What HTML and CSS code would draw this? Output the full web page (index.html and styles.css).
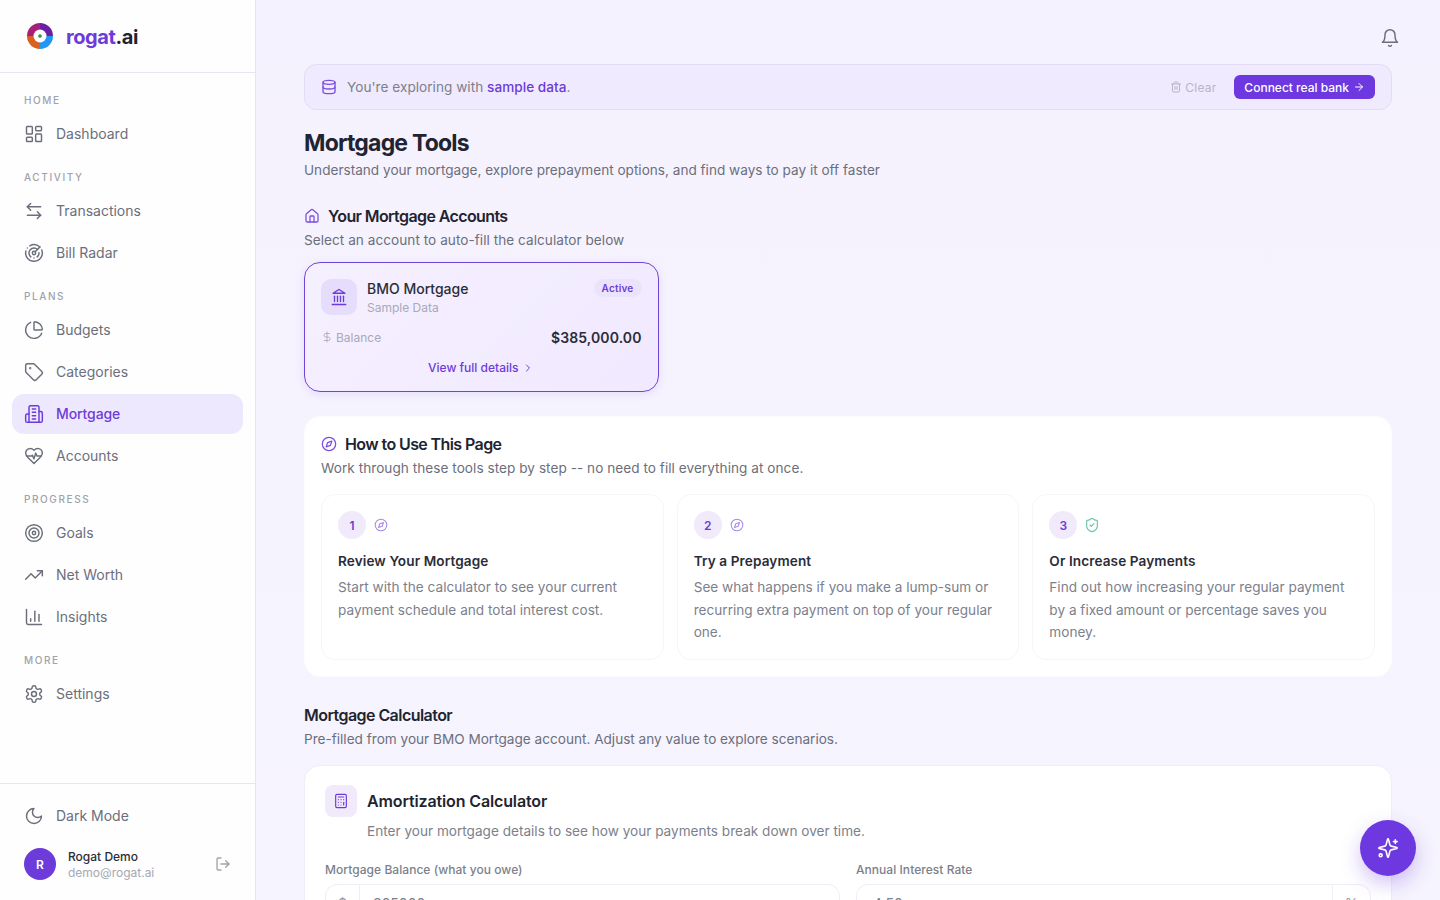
FILE: index.html
```html
<!DOCTYPE html>
<html lang="en">
<head>
<meta charset="utf-8">
<title>Mortgage Tools</title>
<link rel="stylesheet" href="styles.css">
</head>
<body>
<svg class="sprite" aria-hidden="true">
<symbol id="i-dash" viewBox="0 0 24 24"><rect x="3" y="3" width="7" height="9" rx="1"/><rect x="14" y="3" width="7" height="5" rx="1"/><rect x="14" y="12" width="7" height="9" rx="1"/><rect x="3" y="16" width="7" height="5" rx="1"/></symbol>
<symbol id="i-swap" viewBox="0 0 24 24"><path d="M8 3 4 7l4 4"/><path d="M4 7h16"/><path d="m16 21 4-4-4-4"/><path d="M20 17H4"/></symbol>
<symbol id="i-radar" viewBox="0 0 24 24"><path d="M19.07 4.93A10 10 0 0 0 6.99 3.34"/><path d="M4 6h.01"/><path d="M2.29 9.62A10 10 0 1 0 21.31 8.35"/><path d="M16.24 7.76A6 6 0 1 0 8.23 16.67"/><path d="M12 18h.01"/><path d="M17.99 11.66A6 6 0 0 1 15.77 16.67"/><circle cx="12" cy="12" r="2"/><path d="m13.41 10.59 5.66-5.66"/></symbol>
<symbol id="i-pie" viewBox="0 0 24 24"><path d="M21 12c.552 0 1.005-.449.95-.998a10 10 0 0 0-8.953-8.951c-.55-.055-.998.398-.998.95v8a1 1 0 0 0 1 1z"/><path d="M21.21 15.89A10 10 0 1 1 8 2.83"/></symbol>
<symbol id="i-tag" viewBox="0 0 24 24"><path d="M12.586 2.586A2 2 0 0 0 11.172 2H4a2 2 0 0 0-2 2v7.172a2 2 0 0 0 .586 1.414l8.704 8.704a2.426 2.426 0 0 0 3.42 0l6.58-6.58a2.426 2.426 0 0 0 0-3.42z"/><circle cx="7.5" cy="7.5" r=".5"/></symbol>
<symbol id="i-building" viewBox="0 0 24 24"><path d="M6 22V4a2 2 0 0 1 2-2h8a2 2 0 0 1 2 2v18Z"/><path d="M6 12H4a2 2 0 0 0-2 2v6a2 2 0 0 0 2 2h2"/><path d="M18 9h2a2 2 0 0 1 2 2v9a2 2 0 0 1-2 2h-2"/><path d="M10 6h4"/><path d="M10 10h4"/><path d="M10 14h4"/><path d="M10 18h4"/></symbol>
<symbol id="i-heart" viewBox="0 0 24 24"><path d="M19 14c1.49-1.46 3-3.21 3-5.5A5.5 5.5 0 0 0 16.5 3c-1.76 0-3 .5-4.5 2-1.5-1.5-2.74-2-4.5-2A5.5 5.5 0 0 0 2 8.5c0 2.3 1.5 4.05 3 5.5l7 7Z"/><path d="M3.22 12H9.5l.5-1 2 4.5 2-7 1.5 3.5h5.27"/></symbol>
<symbol id="i-target" viewBox="0 0 24 24"><circle cx="12" cy="12" r="10"/><circle cx="12" cy="12" r="6"/><circle cx="12" cy="12" r="2"/></symbol>
<symbol id="i-trend" viewBox="0 0 24 24"><path d="M22 7 13.5 15.5 8.5 10.5 2 17"/><path d="M16 7h6v6"/></symbol>
<symbol id="i-chart" viewBox="0 0 24 24"><path d="M3 3v16a2 2 0 0 0 2 2h16"/><path d="M18 17V9"/><path d="M13 17V5"/><path d="M8 17v-3"/></symbol>
<symbol id="i-gear" viewBox="0 0 24 24"><path d="M12.22 2h-.44a2 2 0 0 0-2 2v.18a2 2 0 0 1-1 1.73l-.43.25a2 2 0 0 1-2 0l-.15-.08a2 2 0 0 0-2.73.73l-.22.38a2 2 0 0 0 .73 2.73l.15.1a2 2 0 0 1 1 1.72v.51a2 2 0 0 1-1 1.74l-.15.09a2 2 0 0 0-.73 2.73l.22.38a2 2 0 0 0 2.73.73l.15-.08a2 2 0 0 1 2 0l.43.25a2 2 0 0 1 1 1.73V20a2 2 0 0 0 2 2h.44a2 2 0 0 0 2-2v-.18a2 2 0 0 1 1-1.73l.43-.25a2 2 0 0 1 2 0l.15.08a2 2 0 0 0 2.73-.73l.22-.39a2 2 0 0 0-.73-2.73l-.15-.08a2 2 0 0 1-1-1.74v-.5a2 2 0 0 1 1-1.74l.15-.09a2 2 0 0 0 .73-2.73l-.22-.38a2 2 0 0 0-2.73-.73l-.15.08a2 2 0 0 1-2 0l-.43-.25a2 2 0 0 1-1-1.73V4a2 2 0 0 0-2-2z"/><circle cx="12" cy="12" r="3"/></symbol>
<symbol id="i-moon" viewBox="0 0 24 24"><path d="M12 3a6 6 0 0 0 9 9 9 9 0 1 1-9-9Z"/></symbol>
<symbol id="i-logout" viewBox="0 0 24 24"><path d="M9 21H5a2 2 0 0 1-2-2V5a2 2 0 0 1 2-2h4"/><path d="m16 17 5-5-5-5"/><path d="M21 12H9"/></symbol>
<symbol id="i-bell" viewBox="0 0 24 24"><path d="M6 8a6 6 0 0 1 12 0c0 7 3 9 3 9H3s3-2 3-9"/><path d="M10.3 21a1.94 1.94 0 0 0 3.4 0"/></symbol>
<symbol id="i-db" viewBox="0 0 24 24"><ellipse cx="12" cy="5" rx="9" ry="3"/><path d="M3 5V19A9 3 0 0 0 21 19V5"/><path d="M3 12A9 3 0 0 0 21 12"/></symbol>
<symbol id="i-trash" viewBox="0 0 24 24"><path d="M3 6h18"/><path d="M19 6v14c0 1-1 2-2 2H7c-1 0-2-1-2-2V6"/><path d="M8 6V4c0-1 1-2 2-2h4c1 0 2 1 2 2v2"/><path d="M10 11v6"/><path d="M14 11v6"/></symbol>
<symbol id="i-arrow" viewBox="0 0 24 24"><path d="M5 12h14"/><path d="m12 5 7 7-7 7"/></symbol>
<symbol id="i-home" viewBox="0 0 24 24"><path d="M15 21v-8a1 1 0 0 0-1-1h-4a1 1 0 0 0-1 1v8"/><path d="M3 10a2 2 0 0 1 .709-1.528l7-5.999a2 2 0 0 1 2.582 0l7 5.999A2 2 0 0 1 21 10v9a2 2 0 0 1-2 2H5a2 2 0 0 1-2-2z"/></symbol>
<symbol id="i-bank" viewBox="0 0 24 24"><path d="M3 22h18"/><path d="M6 18v-7"/><path d="M10 18v-7"/><path d="M14 18v-7"/><path d="M18 18v-7"/><path d="M12 2l8 5H4z"/></symbol>
<symbol id="i-dollar" viewBox="0 0 24 24"><path d="M12 2v20"/><path d="M17 5H9.5a3.5 3.5 0 0 0 0 7h5a3.5 3.5 0 0 1 0 7H6"/></symbol>
<symbol id="i-chev" viewBox="0 0 24 24"><path d="m9 18 6-6-6-6"/></symbol>
<symbol id="i-compass" viewBox="0 0 24 24"><circle cx="12" cy="12" r="10"/><polygon points="16.24 7.76 14.12 14.12 7.76 16.24 9.88 9.88"/></symbol>
<symbol id="i-shield" viewBox="0 0 24 24"><path d="M20 13c0 5-3.5 7.5-7.66 8.95a1 1 0 0 1-.67-.01C7.5 20.5 4 18 4 13V6a1 1 0 0 1 1-1c2 0 4.5-1.2 6.24-2.72a1.17 1.17 0 0 1 1.52 0C14.51 3.81 17 5 19 5a1 1 0 0 1 1 1z"/><path d="m9 12 2 2 4-4"/></symbol>
<symbol id="i-calc" viewBox="0 0 24 24"><rect x="4" y="2" width="16" height="20" rx="2"/><path d="M8 6h8"/><path d="M16 14v4"/><path d="M16 10h.01"/><path d="M12 10h.01"/><path d="M8 10h.01"/><path d="M12 14h.01"/><path d="M8 14h.01"/><path d="M12 18h.01"/><path d="M8 18h.01"/></symbol>
<symbol id="i-spark" viewBox="0 0 24 24"><path d="M9.937 15.5A2 2 0 0 0 8.5 14.063l-6.135-1.582a.5.5 0 0 1 0-.962L8.5 9.936A2 2 0 0 0 9.937 8.5l1.582-6.135a.5.5 0 0 1 .963 0L14.063 8.5A2 2 0 0 0 15.5 9.937l6.135 1.581a.5.5 0 0 1 0 .964L15.5 14.063a2 2 0 0 0-1.437 1.437l-1.582 6.135a.5.5 0 0 1-.963 0z"/><path d="M20 3v4"/><path d="M22 5h-4"/><circle cx="4" cy="20" r="1.6"/></symbol>
</svg>

<div class="app">
  <aside class="sidebar">
    <div class="brand">
      <svg class="logo" viewBox="0 0 28 28" aria-hidden="true">
        <path class="l-purple" d="M14 0A14 14 0 0 1 28 14H14z"/>
        <path class="l-blue" d="M28 14A14 14 0 0 1 14 28V14z"/>
        <path class="l-orange" d="M14 28A14 14 0 0 1 0 14H14z"/>
        <path class="l-magenta" d="M0 14A14 14 0 0 1 14 0V14z"/>
        <circle class="l-white" cx="14" cy="14" r="7"/>
        <circle class="l-green" cx="14" cy="14" r="2"/>
      </svg>
      <span class="brand-name"><span class="brand-accent">rogat</span>.ai</span>
    </div>
    <nav class="nav">
      <div class="group">
        <div class="group-label">HOME</div>
        <a class="item"><svg class="ico"><use href="#i-dash"/></svg>Dashboard</a>
      </div>
      <div class="group">
        <div class="group-label">ACTIVITY</div>
        <a class="item"><svg class="ico"><use href="#i-swap"/></svg>Transactions</a>
        <a class="item"><svg class="ico"><use href="#i-radar"/></svg>Bill Radar</a>
      </div>
      <div class="group">
        <div class="group-label">PLANS</div>
        <a class="item"><svg class="ico"><use href="#i-pie"/></svg>Budgets</a>
        <a class="item"><svg class="ico"><use href="#i-tag"/></svg>Categories</a>
        <a class="item active"><svg class="ico"><use href="#i-building"/></svg>Mortgage</a>
        <a class="item"><svg class="ico"><use href="#i-heart"/></svg>Accounts</a>
      </div>
      <div class="group">
        <div class="group-label">PROGRESS</div>
        <a class="item"><svg class="ico"><use href="#i-target"/></svg>Goals</a>
        <a class="item"><svg class="ico"><use href="#i-trend"/></svg>Net Worth</a>
        <a class="item"><svg class="ico"><use href="#i-chart"/></svg>Insights</a>
      </div>
      <div class="group">
        <div class="group-label">MORE</div>
        <a class="item"><svg class="ico"><use href="#i-gear"/></svg>Settings</a>
      </div>
    </nav>
    <div class="side-foot">
      <a class="item"><svg class="ico"><use href="#i-moon"/></svg>Dark Mode</a>
      <div class="user">
        <div class="avatar">R</div>
        <div class="user-text">
          <div class="user-name">Rogat Demo</div>
          <div class="user-mail">demo@rogat.ai</div>
        </div>
        <svg class="ico-out"><use href="#i-logout"/></svg>
      </div>
    </div>
  </aside>

  <main class="main">
    <div class="topbar"><svg class="bell"><use href="#i-bell"/></svg></div>

    <div class="banner">
      <svg class="banner-ico"><use href="#i-db"/></svg>
      <span class="banner-text">You're exploring with <span class="banner-link">sample data</span>.</span>
      <span class="clear"><svg class="clear-ico"><use href="#i-trash"/></svg>Clear</span>
      <span class="connect">Connect real bank<svg class="connect-ico"><use href="#i-arrow"/></svg></span>
    </div>

    <h1 class="title">Mortgage Tools</h1>
    <p class="subtitle">Understand your mortgage, explore prepayment options, and find ways to pay it off faster</p>

    <section class="accounts">
      <h2 class="sec-head"><svg class="sec-ico"><use href="#i-home"/></svg>Your Mortgage Accounts</h2>
      <p class="sec-sub">Select an account to auto-fill the calculator below</p>
      <div class="acct">
        <div class="acct-top">
          <div class="acct-badge"><svg class="acct-ico"><use href="#i-bank"/></svg></div>
          <div class="acct-names">
            <div class="acct-name">BMO Mortgage</div>
            <div class="acct-type">Sample Data</div>
          </div>
          <span class="pill">Active</span>
        </div>
        <div class="acct-row">
          <span class="acct-label"><svg class="dollar"><use href="#i-dollar"/></svg>Balance</span>
          <span class="acct-amt">$385,000.00</span>
        </div>
        <div class="acct-link">View full details<svg class="chev"><use href="#i-chev"/></svg></div>
      </div>
    </section>

    <section class="howto">
      <h2 class="sec-head"><svg class="sec-ico"><use href="#i-compass"/></svg><span class="howto-title">How to Use This Page</span></h2>
      <p class="sec-sub">Work through these tools step by step -- no need to fill everything at once.</p>
      <div class="steps">
        <article class="step">
          <div class="step-top"><span class="num">1</span><svg class="step-ico"><use href="#i-compass"/></svg></div>
          <h3 class="step-title">Review Your Mortgage</h3>
          <p class="step-text">Start with the calculator to see your current payment schedule and total interest cost.</p>
        </article>
        <article class="step">
          <div class="step-top"><span class="num">2</span><svg class="step-ico"><use href="#i-compass"/></svg></div>
          <h3 class="step-title">Try a Prepayment</h3>
          <p class="step-text">See what happens if you make a lump-sum or recurring extra payment on top of your regular one.</p>
        </article>
        <article class="step">
          <div class="step-top"><span class="num">3</span><svg class="step-ico green"><use href="#i-shield"/></svg></div>
          <h3 class="step-title">Or Increase Payments</h3>
          <p class="step-text">Find out how increasing your regular payment by a fixed amount or percentage saves you money.</p>
        </article>
      </div>
    </section>

    <section class="calc-sec">
      <h2 class="calc-head">Mortgage Calculator</h2>
      <p class="sec-sub">Pre-filled from your BMO Mortgage account. Adjust any value to explore scenarios.</p>
      <div class="calc">
        <div class="calc-top">
          <div class="calc-badge"><svg class="calc-ico"><use href="#i-calc"/></svg></div>
          <h3 class="calc-title">Amortization Calculator</h3>
        </div>
        <p class="calc-sub">Enter your mortgage details to see how your payments break down over time.</p>
        <div class="fields">
          <div class="field">
            <div class="field-label">Mortgage Balance (what you owe)</div>
            <div class="input"><span class="affix pre">$</span><span class="val">385000</span></div>
          </div>
          <div class="field">
            <div class="field-label">Annual Interest Rate</div>
            <div class="input"><span class="val">4.50</span><span class="affix post">%</span></div>
          </div>
        </div>
      </div>
    </section>
  </main>
</div>
<button class="fab" aria-label="Assistant"><svg class="fab-ico"><use href="#i-spark"/></svg></button>
</body>
</html>
```
FILE: styles.css
```css
* { box-sizing: border-box; }
html, body { margin: 0; height: 100%; overflow: hidden; }
body { font-family: Inter, "Liberation Sans", sans-serif; color: #1f2430; background: #f5f2ff; }
h1, h2, h3, p { margin: 0; }
.sprite { display: none; }
svg { fill: none; stroke: currentColor; stroke-width: 2; stroke-linecap: round; stroke-linejoin: round; flex: none; }

.app { display: flex; height: 900px; overflow: hidden; }

/* Sidebar */
.sidebar { width: 256px; flex: none; height: 900px; background: #fefefe; border-right: 1px solid #e6e3f3; display: flex; flex-direction: column; }
.brand { height: 73px; flex: none; border-bottom: 1px solid #e7e6ee; display: flex; align-items: center; gap: 13px; padding: 0 0 0 27px; }
.logo { width: 26px; height: 26px; stroke: none; }
.l-purple { fill: #6b1fa3; }
.l-blue { fill: #2196f3; }
.l-orange { fill: #d9601f; }
.l-magenta { fill: #a81f78; }
.l-white { fill: #fff; }
.l-green { fill: #2e9e3f; }
.brand-name { font-size: 20px; font-weight: 700; letter-spacing: -0.4px; color: #1f2430; padding-top: 2px; }
.brand-accent { color: #6d3bd9; }
.nav { flex: 1; padding: 19px 12px 0; }
.group { margin-bottom: 15px; }
.group-label { font-size: 10px; font-weight: 500; line-height: 16px; letter-spacing: 1.6px; color: #a0a2ac; padding-left: 12px; margin-bottom: 6px; }
.item { display: flex; align-items: center; gap: 12px; height: 40px; padding: 0 12px 1px; margin-bottom: 2px; border-radius: 12px; font-size: 14px; font-weight: 400; color: #6b6f7b; }
.item:last-child { margin-bottom: 0; }
.ico { width: 20px; height: 20px; stroke-width: 1.75; color: #6b6f7b; }
.item.active { background: #ede8fd; color: #6d3bd9; font-weight: 500; letter-spacing: -0.1px; }
.active .ico { color: #6d3bd9; }
.side-foot { flex: none; height: 117px; border-top: 1px solid #e7e6ee; padding: 12px 12px 0; }
.user { display: flex; align-items: center; height: 32px; margin-top: 12px; padding: 0 12px; }
.avatar { width: 32px; height: 32px; border-radius: 50%; background: #6d3bd9; color: #fff; font-size: 12px; font-weight: 600; display: flex; align-items: center; justify-content: center; }
.user-text { margin-left: 12px; flex: 1; padding-top: 1px; }
.user-name { font-size: 12px; font-weight: 500; line-height: 16px; color: #2a2d38; }
.user-mail { font-size: 12px; line-height: 16px; color: #a6a8b4; }
.ico-out { width: 16px; height: 16px; color: #a0a2ad; }

/* Main */
.main { flex: 1; min-width: 0; padding: 0 48px; background: linear-gradient(180deg, #f5f2ff 0%, #f6f4fe 100%); }
.topbar { height: 64px; display: flex; align-items: center; justify-content: flex-end; }
.bell { width: 20px; height: 20px; color: #6b6f7b; margin-top: 11px; margin-right: -8px; stroke-width: 1.75; }
.banner { height: 46px; display: flex; align-items: center; padding: 0 16px; border: 1px solid #e2dcf5; border-radius: 12px; background: #efeafd; }
.banner-ico { width: 16px; height: 16px; color: #7c4ee0; margin-right: 10px; stroke-width: 2; }
.banner-text { flex: 1; font-size: 13.6px; letter-spacing: 0.03px; color: #7c7f8c; }
.banner-link { color: #6d3bd9; font-weight: 500; }
.clear { display: inline-flex; align-items: center; gap: 3px; font-size: 12px; letter-spacing: 0.2px; color: #b8b6c6; margin-right: 18px; }
.clear-ico { width: 12px; height: 12px; }
.connect { display: inline-flex; align-items: center; gap: 4px; height: 24px; padding: 0 10px; border-radius: 6px; background: #6d38df; color: #fff; font-size: 12px; font-weight: 500; }
.connect-ico { width: 12px; height: 12px; }
.title { font-size: 23px; font-weight: 700; line-height: 32px; letter-spacing: -0.8px; color: #1f2430; margin-top: 17px; }
.subtitle { font-size: 13.6px; line-height: 20px; color: #6b6f7b; margin-top: 1px; }

.accounts { margin-top: 24px; }
.sec-head { display: flex; align-items: center; gap: 8px; font-size: 16px; font-weight: 600; line-height: 24px; letter-spacing: -0.6px; color: #1f2430; height: 24px; }
.sec-ico { width: 16px; height: 16px; color: #7c4ee0; stroke-width: 1.9; }
.sec-sub { font-size: 13.6px; line-height: 20px; letter-spacing: 0.04px; color: #6b6f7b; margin-top: 2px; }
.acct { width: 354.5px; height: 130px; margin-top: 12px; padding: 16px; border: 1.5px solid #7044d6; border-radius: 16px; background: linear-gradient(135deg, #f5f0ff, #f1e9ff); box-shadow: 0 2px 8px rgba(109, 59, 217, .12); }
.acct-top { display: flex; align-items: flex-start; }
.acct-badge { width: 36px; height: 36px; border-radius: 10px; background: #e6dcfb; display: flex; align-items: center; justify-content: center; margin-right: 10px; }
.acct-ico { width: 18px; height: 18px; color: #6d3bd9; stroke-width: 1.75; }
.acct-names { flex: 1; }
.acct-name { font-size: 14px; font-weight: 500; line-height: 20px; color: #2a2d38; }
.acct-type { font-size: 12px; line-height: 16px; color: #a9a9b8; margin-top: 1px; }
.pill { height: 18px; padding: 0 8px; border-radius: 9px; background: #ebe3fb; color: #6d3bd9; font-size: 10px; font-weight: 600; letter-spacing: 0.2px; line-height: 18px; }
.acct-row { display: flex; justify-content: space-between; align-items: center; margin-top: 11px; height: 20px; }
.acct-label { display: inline-flex; align-items: center; gap: 3px; font-size: 12px; color: #a9a9b8; }
.dollar { width: 12px; height: 12px; stroke-width: 1.75; }
.acct-amt { font-size: 14px; font-weight: 600; letter-spacing: 0.1px; color: #2a2d38; }
.acct-link { display: flex; align-items: center; justify-content: center; gap: 4px; margin-top: 13px; font-size: 12px; font-weight: 500; line-height: 16px; color: #6d3bd9; }
.chev { width: 12px; height: 12px; }

.howto { margin-top: 24px; height: 261px; padding: 15px 16px 16px; border-radius: 16px; background: #fff; border: 1px solid #fcfbff; }
.steps { display: grid; grid-template-columns: repeat(3, 1fr); gap: 13px; margin-top: 16px; }
.step { height: 166px; padding: 16px; border: 1px solid #f6f5fa; border-radius: 14px; background: #fff; }
.step-top { display: flex; align-items: center; gap: 8px; height: 28px; }
.num { width: 28px; height: 28px; border-radius: 50%; background: #f0eafb; color: #6d3bd9; font-size: 12px; font-weight: 600; display: flex; align-items: center; justify-content: center; }
.step-ico { width: 14px; height: 14px; color: #a688ea; stroke-width: 1.75; }
.step-ico.green { color: #6cc7a4; width: 16px; height: 16px; margin: 0 -1px; }
.step-title { font-size: 13.6px; font-weight: 600; line-height: 20px; color: #2a2d38; letter-spacing: 0.1px; margin-top: 12px; }
.step-text { font-size: 13.6px; line-height: 22.5px; letter-spacing: 0.01px; color: #7c7f8c; margin-top: 5px; }

.calc-sec { margin-top: 26px; }
.calc-sec .sec-sub { letter-spacing: 0; }
.calc-head { font-size: 16px; font-weight: 600; line-height: 24px; letter-spacing: -0.55px; color: #1f2430; }
.calc { height: 200px; margin-top: 16px; padding: 19px 20px; border: 1px solid #efedf7; border-radius: 16px; background: #fff; }
.calc-top { display: flex; align-items: center; gap: 10px; }
.calc-badge { width: 32px; height: 32px; border-radius: 8px; background: #f0eafb; display: flex; align-items: center; justify-content: center; }
.calc-ico { width: 16px; height: 16px; color: #6d3bd9; stroke-width: 1.75; }
.calc-title { font-size: 16px; font-weight: 600; letter-spacing: -0.13px; color: #1f2430; }
.calc-sub { font-size: 13.6px; line-height: 20px; color: #7c7f8c; margin: 4px 0 0 42px; }
.fields { display: grid; grid-template-columns: 515px 515px; gap: 16px; margin-top: 21px; }
.field-label { font-size: 12px; font-weight: 500; line-height: 16px; letter-spacing: 0.05px; color: #7c7f8c; margin-bottom: 6px; }
.input { height: 38px; display: flex; align-items: center; border: 1px solid #efedf5; border-radius: 12px; font-size: 14px; color: #7c7f8c; }
.affix { color: #9a9ca6; text-align: center; height: 100%; display: flex; align-items: center; justify-content: center; }
.pre { width: 34px; border-right: 1px solid #efedf5; margin-right: 13px; }
.post { width: 38px; border-left: 1px solid #efedf5; }
.val { flex: 1; }
.input .val:first-child { padding-left: 16px; }

.fab { position: fixed; right: 24px; bottom: 24px; width: 56px; height: 56px; border: 0; padding: 0; border-radius: 50%; background: #6d38df; color: #fff; display: flex; align-items: center; justify-content: center; box-shadow: 0 8px 20px rgba(109, 56, 223, .3); }
.fab-ico { width: 22px; height: 22px; stroke-width: 1.75; }
```
